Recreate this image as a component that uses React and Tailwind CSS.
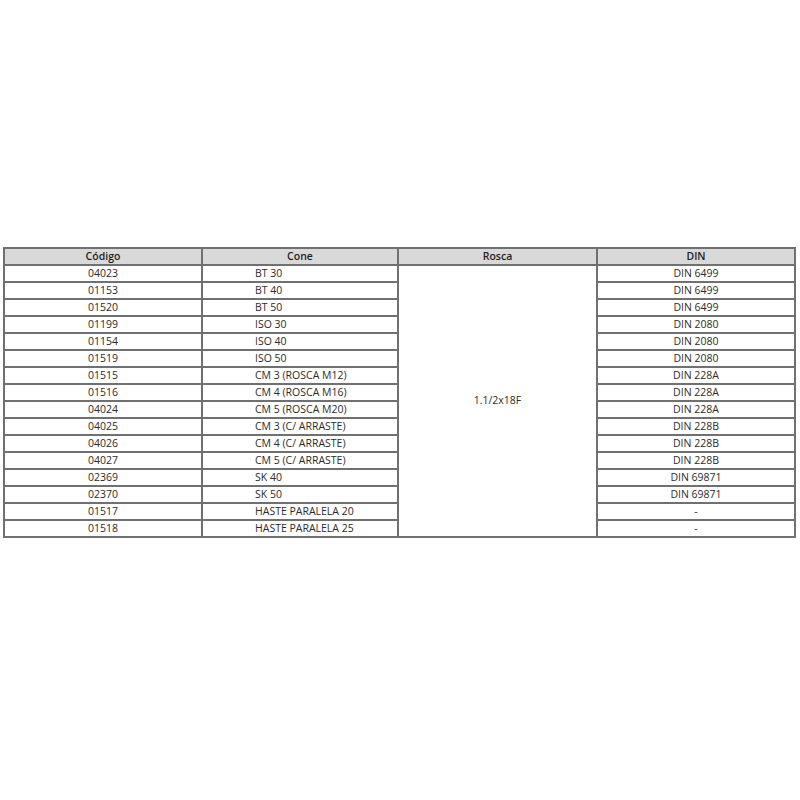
const ROWS = [
  ["04023", "BT 30", "DIN 6499"],
  ["01153", "BT 40", "DIN 6499"],
  ["01520", "BT 50", "DIN 6499"],
  ["01199", "ISO 30", "DIN 2080"],
  ["01154", "ISO 40", "DIN 2080"],
  ["01519", "ISO 50", "DIN 2080"],
  ["01515", "CM 3 (ROSCA M12)", "DIN 228A"],
  ["01516", "CM 4 (ROSCA M16)", "DIN 228A"],
  ["04024", "CM 5 (ROSCA M20)", "DIN 228A"],
  ["04025", "CM 3 (C/ ARRASTE)", "DIN 228B"],
  ["04026", "CM 4 (C/ ARRASTE)", "DIN 228B"],
  ["04027", "CM 5 (C/ ARRASTE)", "DIN 228B"],
  ["02369", "SK 40", "DIN 69871"],
  ["02370", "SK 50", "DIN 69871"],
  ["01517", "HASTE PARALELA 20", "-"],
  ["01518", "HASTE PARALELA 25", "-"],
];

const cell = "border-2 border-[#707070] h-[17px] p-0 leading-none";

export default function App() {
  return (
    <div className="w-[800px] h-[800px] bg-white pt-[247px] pl-[3px]" style={{ fontFamily: '"Open Sans", "Liberation Sans", sans-serif' }}>
      <table className="w-[791px] border-collapse table-fixed text-[10.5px] text-[#2b2b2b]">
        <colgroup>
          <col className="w-[198px]" />
          <col className="w-[196px]" />
          <col className="w-[199px]" />
          <col className="w-[198px]" />
        </colgroup>
        <thead>
          <tr className="bg-[#d9d9d9] text-[#1f1f1f]">
            <th className={`${cell} text-center font-semibold`}>Código</th>
            <th className={`${cell} text-center font-semibold`}>Cone</th>
            <th className={`${cell} text-center font-semibold`}>Rosca</th>
            <th className={`${cell} text-center font-semibold`}>DIN</th>
          </tr>
        </thead>
        <tbody>
          {ROWS.map(([code, cone, din], i) => (
            <tr key={code}>
              <td className={`${cell} text-center`}>{code}</td>
              <td className={`${cell} text-left pl-[52px]`}>{cone}</td>
              {i === 0 && (
                <td rowSpan={ROWS.length} className="border-2 border-[#707070] text-center align-middle p-0">
                  1.1/2x18F
                </td>
              )}
              <td className={`${cell} text-center`}>{din}</td>
            </tr>
          ))}
        </tbody>
      </table>
    </div>
  );
}
